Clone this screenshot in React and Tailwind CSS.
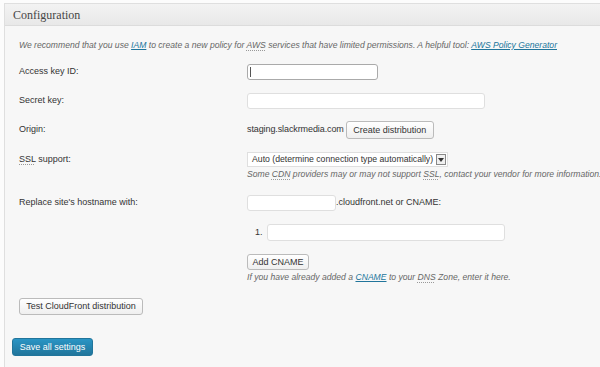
import React from "react";

const sans = { fontFamily: '"Liberation Sans", Arial, sans-serif' };

function Label({ children, h }) {
    return (
        <div className={`w-[228px] shrink-0 flex items-center text-[#333] ${h}`}>{children}</div>
    );
}

function Button({ children, className = "" }) {
    return (
        <button
            type="button"
            className={`px-[4px] whitespace-nowrap bg-gradient-to-b from-white to-[#efefef] border border-[#bbb] rounded-[3px] text-[#333] text-[9px] leading-none ${className}`}
        >
            {children}
        </button>
    );
}

function Abbr({ children }) {
    return <span className="underline decoration-dotted decoration-[#999] underline-offset-2">{children}</span>;
}

function Link({ children }) {
    return <a className="text-[#21759b] underline underline-offset-1">{children}</a>;
}

export default function App() {
    return (
        <div className="w-[600px] h-[367px] overflow-hidden bg-[#fcfcfc] pl-[4px] pt-[3px]" style={sans}>
            <div className="w-[660px] h-[400px] border border-[#dfdfdf] bg-[#f7f7f7] text-[9px]">
                {/* Header */}
                <div className="h-[22px] bg-gradient-to-b from-[#f3f3f3] to-[#e8e8e8] border-b border-[#dcdcdc] flex items-center pl-[8px]">
                    <span className="text-[12px] text-[#464646] font-['Liberation_Serif',Georgia,serif] leading-none">
                        Configuration
                    </span>
                </div>

                <div className="px-[14px] pt-[13px]">
                    <p className="h-[12px] leading-[12px] italic text-[#666] text-[8.6px] whitespace-nowrap">
                        We recommend that you use <Link>IAM</Link> to create a new policy for <Abbr>AWS</Abbr> services that have limited permissions. A helpful tool: <Link>AWS Policy Generator</Link>
                    </p>

                    {/* Access key */}
                    <div className="flex mt-[13px]">
                        <Label h="h-[16px]">Access key ID:</Label>
                        <div className="w-[131px] h-[16px] bg-white border border-[#aaa] rounded-[3px] flex items-center pl-[2px]">
                            <span className="w-[1px] h-[10px] bg-[#555]" />
                        </div>
                    </div>

                    {/* Secret key */}
                    <div className="flex mt-[13px]">
                        <Label h="h-[16px]">Secret key:</Label>
                        <div className="w-[238px] h-[16px] bg-white border border-[#dfdfdf] rounded-[3px]" />
                    </div>

                    {/* Origin */}
                    <div className="flex mt-[12px]">
                        <Label h="h-[18px]">Origin:</Label>
                        <div className="flex items-center gap-[2px] text-[#333]">
                            <span className="tracking-[-0.1px]">staging.slackrmedia.com</span>
                            <Button className="h-[18px] w-[88px]">Create distribution</Button>
                        </div>
                    </div>

                    {/* SSL */}
                    <div className="flex mt-[13px]">
                        <Label h="h-[15px]">
                            <span><Abbr>SSL</Abbr> support:</span>
                        </Label>
                        <div>
                            <div className="flex items-center h-[15px]">
                                <div className="h-[15px] bg-white border border-[#dfdfdf] flex items-center pl-[4px] pr-[1px] gap-[3px] text-[#333] text-[8.7px]">
                                    <span className="whitespace-nowrap">Auto (determine connection type automatically)</span>
                                    <span className="w-[10px] h-[11px] border border-[#888] bg-[#f0f0f0] flex items-center justify-center">
                                        <svg width="6" height="4" viewBox="0 0 6 4"><path d="M0 0h6L3 4z" fill="#333" /></svg>
                                    </span>
                                </div>
                            </div>
                            <p className="h-[12px] leading-[12px] italic text-[#666] text-[8.6px] whitespace-nowrap mt-[1px]">
                                Some <Abbr>CDN</Abbr> providers may or may not support <Abbr>SSL</Abbr>, contact your vendor for more information.
                            </p>
                        </div>
                    </div>

                    {/* Hostname */}
                    <div className="flex mt-[15px]">
                        <Label h="h-[16px]">Replace site's hostname with:</Label>
                        <div>
                            <div className="flex items-center h-[16px] text-[#333]">
                                <div className="w-[89px] h-[16px] bg-white border border-[#dfdfdf] rounded-[3px]" />
                                <span>.cloudfront.net or CNAME:</span>
                            </div>
                            <div className="flex items-center h-[17px] mt-[13px] text-[#333]">
                                <span className="w-[20px] pl-[8px]">1.</span>
                                <div className="w-[238px] h-[17px] bg-white border border-[#dfdfdf] rounded-[3px]" />
                            </div>
                            <Button className="h-[16px] w-[62px] mt-[13px] block">Add CNAME</Button>
                            <p className="h-[12px] leading-[12px] italic text-[#666] text-[8.6px] whitespace-nowrap mt-[1px]">
                                If you have already added a <Link>CNAME</Link> to your <Abbr>DNS</Abbr> Zone, enter it here.
                            </p>
                        </div>
                    </div>

                    <Button className="h-[17px] w-[124px] mt-[15px] block">Test CloudFront distribution</Button>
                </div>

                <div className="px-[7px]">
                    <button
                        type="button"
                        className="mt-[23px] h-[18px] w-[81px] rounded-[3px] border border-[#21759b] bg-gradient-to-b from-[#2a95c5] to-[#21759b] text-white text-[9px] leading-none"
                    >
                        Save all settings
                    </button>
                </div>
            </div>
        </div>
    );
}
